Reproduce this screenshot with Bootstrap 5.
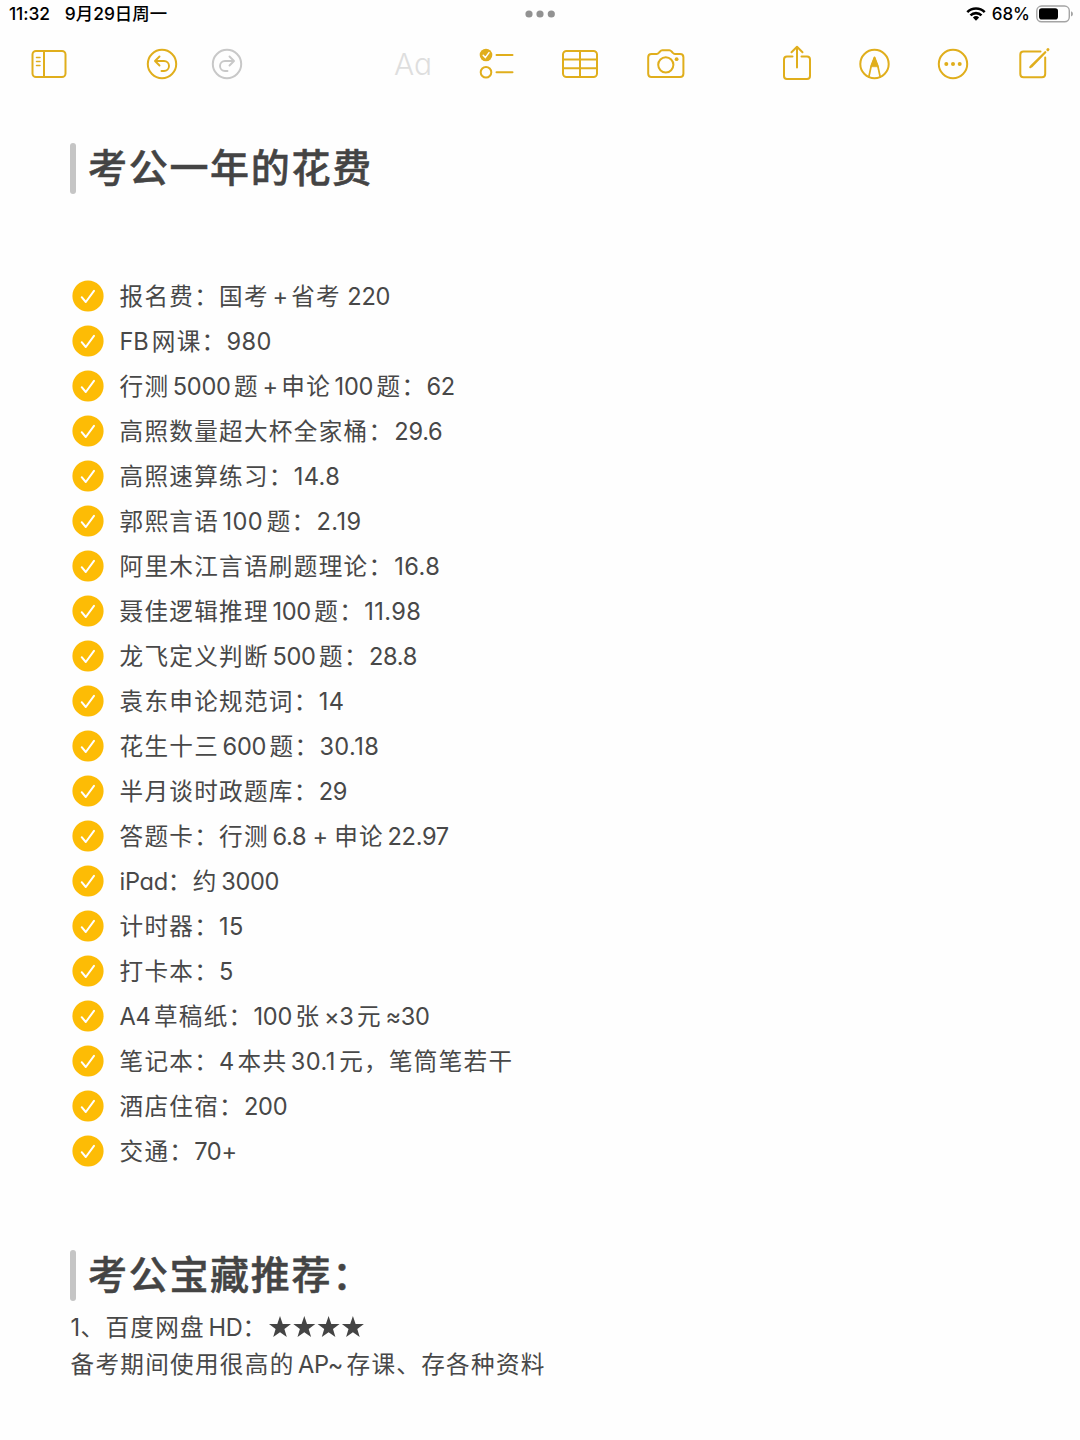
<!DOCTYPE html>
<html lang="zh-CN">
<head>
<meta charset="utf-8">
<meta name="viewport" content="width=device-width, initial-scale=1">
<title>考公一年的花费</title>
<link href="https://cdn.jsdelivr.net/npm/bootstrap@5.3.0/dist/css/bootstrap.min.css" rel="stylesheet">
<style>
  body { background:#fefefe; color:#484848; font-family:Inter,"Noto Sans CJK SC",sans-serif; height:1440px; overflow:hidden; }
  .status-bar { height:28px; padding:0 7px 0 9px; color:#000; font-size:17.4px; font-weight:500; line-height:28px; }
  .status-date { margin-left:15px; }
  .status-time { letter-spacing:-.1px; }
  .status-pct { margin:0 6px 0 6px; font-size:17px; }
  .dots { left:525px; top:10px; }
  .tools { height:72px; padding-left:29px; color:#e0ae1c; }
  .tools svg { width:40px; height:40px; flex:none; fill:none; stroke:currentColor; stroke-width:2; stroke-linecap:round; stroke-linejoin:round; }
  .t-undo { margin-left:73px; } .t-redo { margin-left:25px; color:#c8c8c8; }
  .t-font { margin-left:147px; width:39px; color:#dedede; font-size:30px; font-weight:300; line-height:40px; font-family:Inter,sans-serif; font-feature-settings:"cv11"; }
  .t-check { margin-left:43px; } .t-table { margin-left:44px; } .t-cam { margin-left:46px; }
  .t-share { margin-left:91px; } .t-pen { margin-left:37px; } .t-more { margin-left:39px; } .t-new { margin-left:41px; }
  .note { padding:43px 70px 0; }
  .head { height:51px; gap:12px; }
  .head::before { content:""; width:6px; height:51px; border-radius:3px; background:#c5c5c5; }
  .head h1 { margin:0; font-size:39px; font-weight:500; line-height:49px; letter-spacing:1.7px; color:#444; -webkit-text-stroke:.5px #444; }
  .entries { margin-top:79.5px; margin-bottom:76.5px; }
  .entries li { height:45px; padding-left:2px; gap:15.5px; }
  .entries svg { width:32px; height:32px; flex:none; }
  .line { font-size:23.6px; letter-spacing:1.3px; line-height:37px; white-space:pre; }
  .n { font-size:23.6px; letter-spacing:-.3px; font-feature-settings:"cv11"; }
  .w { letter-spacing:.4px; }
  .a { margin-left:3.5px; } .b { margin-right:3.5px; }
  .c { margin-left:1px; }
  .tail { padding:8px 0 0 .5px; }
  .stars { width:97px; height:24px; margin-left:1px; vertical-align:-3px; }
</style>
</head>
<body>
<svg class="d-none">
  <symbol id="ck" viewBox="0 0 32 32"><circle cx="16" cy="16" r="15.6" fill="#fdbc05"/><path d="M9.7 17.2 13.8 22 22 10.8" fill="none" stroke="#fff" stroke-width="2" stroke-linecap="round" stroke-linejoin="round"/></symbol>
</svg>
<header>
  <div class="status-bar d-flex align-items-center position-relative">
    <span class="status-time">11:32</span><span class="status-date">9月29日周一</span>
    <svg class="dots position-absolute" width="30" height="8" fill="#929292"><circle cx="4" cy="4" r="3.6"/><circle cx="15" cy="4" r="3.6"/><circle cx="26.300" cy="4" r="3.600"/></svg>
    <svg class="ms-auto" width="20" height="16" viewBox="0 0 20 16" fill="none" stroke="#000" stroke-width="2.6"><path d="M1.300 6.100a12.400 12.400 0 0 1 17.400 0M4.500 9.400a7.900 7.900 0 0 1 11 0"/><path d="M10 14.700 6.900 11.500a4.600 4.600 0 0 1 6.200 0z" fill="#000" stroke="none"/></svg>
    <span class="status-pct">68%</span>
    <svg width="37" height="18" viewBox="0 0 37 18"><rect x=".8" y="1" width="32.500" height="15.800" rx="4.800" fill="none" stroke="#a4a4a4" stroke-width="1.400"/><rect x="3" y="3.200" width="19" height="11.400" rx="2.800"/><path d="M35 6.200q2 .8 2 2.700t-2 2.700z" fill="#a4a4a4"/></svg>
  </div>
  <nav class="tools d-flex align-items-center">
    <svg viewBox="0 0 40 40"><rect x="3.500" y="7" width="33" height="26" rx="3.500"/><path d="M15 7v26"/><path d="M7.500 13.500h3.500M7.500 17.500h3.500M7.500 21.500h3.500" stroke-width="1.500"/></svg>
    <svg class="t-undo" viewBox="0 0 40 40"><circle cx="20" cy="20" r="14.200"/><path d="M17.500 12.500 13 17l4.500 4.500M13.500 17h8.500a5 5 0 0 1 0 10h-2.500" stroke-width="1.900"/></svg>
    <svg class="t-redo" viewBox="0 0 40 40"><circle cx="20" cy="20" r="14.200"/><path d="M22.500 12.500 27 17l-4.500 4.500M26.500 17h-8.500a5 5 0 0 0 0 10h2.500" stroke-width="1.900"/></svg>
    <span class="t-font">Aa</span>
    <svg class="t-check" viewBox="0 0 40 40"><circle cx="10" cy="11" r="6.300" fill="currentColor" stroke="none"/><path d="M7.200 11.300 9.300 13.600 13 8.600" stroke="#fff" stroke-width="1.500"/><circle cx="10" cy="28.300" r="5.300"/><path d="M20.500 11H36.500M20.500 28.300H36.500"/></svg>
    <svg class="t-table" viewBox="0 0 40 40"><rect x="3" y="7" width="34" height="26" rx="3.500"/><path d="M20 7v26M3 15.600h34M3 24.200h34"/></svg>
    <svg class="t-cam" viewBox="0 0 40 40"><path d="M5.500 10h5.200c1.100 0 1.600-.5 2.300-1.300l1-1.200c.7-.9 1.200-1.200 2.300-1.200h7c1.100 0 1.600.3 2.300 1.200l1 1.200c.7.8 1.200 1.300 2.300 1.300h5.200q3.300 0 3.300 3.300v16.500q0 3.200-3.300 3.200H5.500q-3.300 0-3.300-3.200V13.300Q2.200 10 5.500 10z"/><circle cx="19.800" cy="20.800" r="7.600"/><circle cx="30.600" cy="15.200" r="1.900" fill="currentColor" stroke="none"/></svg>
    <svg class="t-share" viewBox="0 0 40 40"><path d="M15.500 12.500H10q-3 0-3 3V32q0 3 3 3h20q3 0 3-3V15.500q0-3-3-3h-5.500M20 23.500V3M14.500 8.200 20 2.800l5.500 5.400"/></svg>
    <svg class="t-pen" viewBox="0 0 40 40"><circle cx="20.500" cy="20" r="14.200"/><path d="M14.800 33 17.300 21.500 20.500 13.300 23.700 21.500 26.200 33" stroke-width="1.700"/><path d="M17 22.300 20.500 13l3.500 9.300z" fill="currentColor" stroke-width="1"/></svg>
    <svg class="t-more" viewBox="0 0 40 40"><circle cx="20" cy="20" r="14.200"/><g fill="currentColor" stroke="none"><circle cx="13.300" cy="20" r="2"/><circle cx="20" cy="20" r="2"/><circle cx="26.700" cy="20" r="2"/></g></svg>
    <svg class="t-new" viewBox="0 0 40 40"><path d="M26.500 7.500H9.500Q6.300 7.500 6.300 10.700V30q0 3.200 3.200 3.200H28q3.200 0 3.200-3.200V13.500"/><path d="M31.300 8.200 17.500 21.800 16.300 23.200 18 22z" stroke-width="2.200"/><path d="M33.800 5.700 34 5.500" stroke-width="2.900"/></svg>
  </nav>
</header>
<main class="note">
  <div class="head d-flex"><h1>考公一年的花费</h1></div>
  <ul class="entries list-unstyled">
    <li class="d-flex align-items-center"><svg><use href="#ck"/></svg><span class="line">报名费：国考<span class="n a b">+</span>省考<span class="n"> 220</span></span></li>
    <li class="d-flex align-items-center"><svg><use href="#ck"/></svg><span class="line"><span class="n b">FB</span>网课：<span class="n w">980</span></span></li>
    <li class="d-flex align-items-center"><svg><use href="#ck"/></svg><span class="line">行测<span class="n a b">5000</span>题<span class="n a b">+</span>申论<span class="n a b">100</span>题：<span class="n">62</span></span></li>
    <li class="d-flex align-items-center"><svg><use href="#ck"/></svg><span class="line">高照数量超大杯全家桶：<span class="n c">29.6</span></span></li>
    <li class="d-flex align-items-center"><svg><use href="#ck"/></svg><span class="line">高照速算练习：<span class="n w">14.8</span></span></li>
    <li class="d-flex align-items-center"><svg><use href="#ck"/></svg><span class="line">郭熙言语<span class="n a b w">100</span>题：<span class="n w">2.19</span></span></li>
    <li class="d-flex align-items-center"><svg><use href="#ck"/></svg><span class="line">阿里木江言语刷题理论：<span class="n w c">16.8</span></span></li>
    <li class="d-flex align-items-center"><svg><use href="#ck"/></svg><span class="line">聂佳逻辑推理<span class="n a b">100</span>题：<span class="n w">11.98</span></span></li>
    <li class="d-flex align-items-center"><svg><use href="#ck"/></svg><span class="line">龙飞定义判断<span class="n a b">500</span>题：<span class="n">28.8</span></span></li>
    <li class="d-flex align-items-center"><svg><use href="#ck"/></svg><span class="line">袁东申论规范词：<span class="n w">14</span></span></li>
    <li class="d-flex align-items-center"><svg><use href="#ck"/></svg><span class="line">花生十三<span class="n a b">600</span>题：<span class="n w">30.18</span></span></li>
    <li class="d-flex align-items-center"><svg><use href="#ck"/></svg><span class="line">半月谈时政题库：<span class="n">29</span></span></li>
    <li class="d-flex align-items-center"><svg><use href="#ck"/></svg><span class="line">答题卡：行测<span class="n a">6.8 + </span>申论<span class="n a">22.97</span></span></li>
    <li class="d-flex align-items-center"><svg><use href="#ck"/></svg><span class="line"><span class="n">iPad</span>：约<span class="n a">3000</span></span></li>
    <li class="d-flex align-items-center"><svg><use href="#ck"/></svg><span class="line">计时器：<span class="n w">15</span></span></li>
    <li class="d-flex align-items-center"><svg><use href="#ck"/></svg><span class="line">打卡本：<span class="n">5</span></span></li>
    <li class="d-flex align-items-center"><svg><use href="#ck"/></svg><span class="line"><span class="n b">A4</span>草稿纸：<span class="n b">100</span>张<span class="n a b">×3</span>元<span class="n a">≈30</span></span></li>
    <li class="d-flex align-items-center"><svg><use href="#ck"/></svg><span class="line">笔记本：<span class="n b">4</span>本共<span class="n a b w">30.1</span>元，笔筒笔若干</span></li>
    <li class="d-flex align-items-center"><svg><use href="#ck"/></svg><span class="line">酒店住宿：<span class="n">200</span></span></li>
    <li class="d-flex align-items-center"><svg><use href="#ck"/></svg><span class="line">交通：<span class="n">70+</span></span></li>
  </ul>
  <div class="head d-flex"><h1>考公宝藏推荐：</h1></div>
  <div class="tail">
    <div class="line"><span class="n w">1</span>、百度网盘<span class="n a">HD</span>：<svg class="stars" viewBox="0 0 97 24" fill="#444"><defs><path id="st" d="M12 1 14.700 8.900 23 9 16.400 14 18.800 22 12 17.200 5.200 22 7.600 14 1 9 9.300 8.900z"/></defs><use href="#st"/><use href="#st" x="24.300"/><use href="#st" x="48.600"/><use href="#st" x="72.900"/></svg></div>
    <div class="line">备考期间使用很高的<span class="n a b">AP~</span>存课、存各种资料</div>
  </div>
</main>
<script src="https://cdn.jsdelivr.net/npm/bootstrap@5.3.0/dist/js/bootstrap.bundle.min.js"></script>
</body>
</html>
